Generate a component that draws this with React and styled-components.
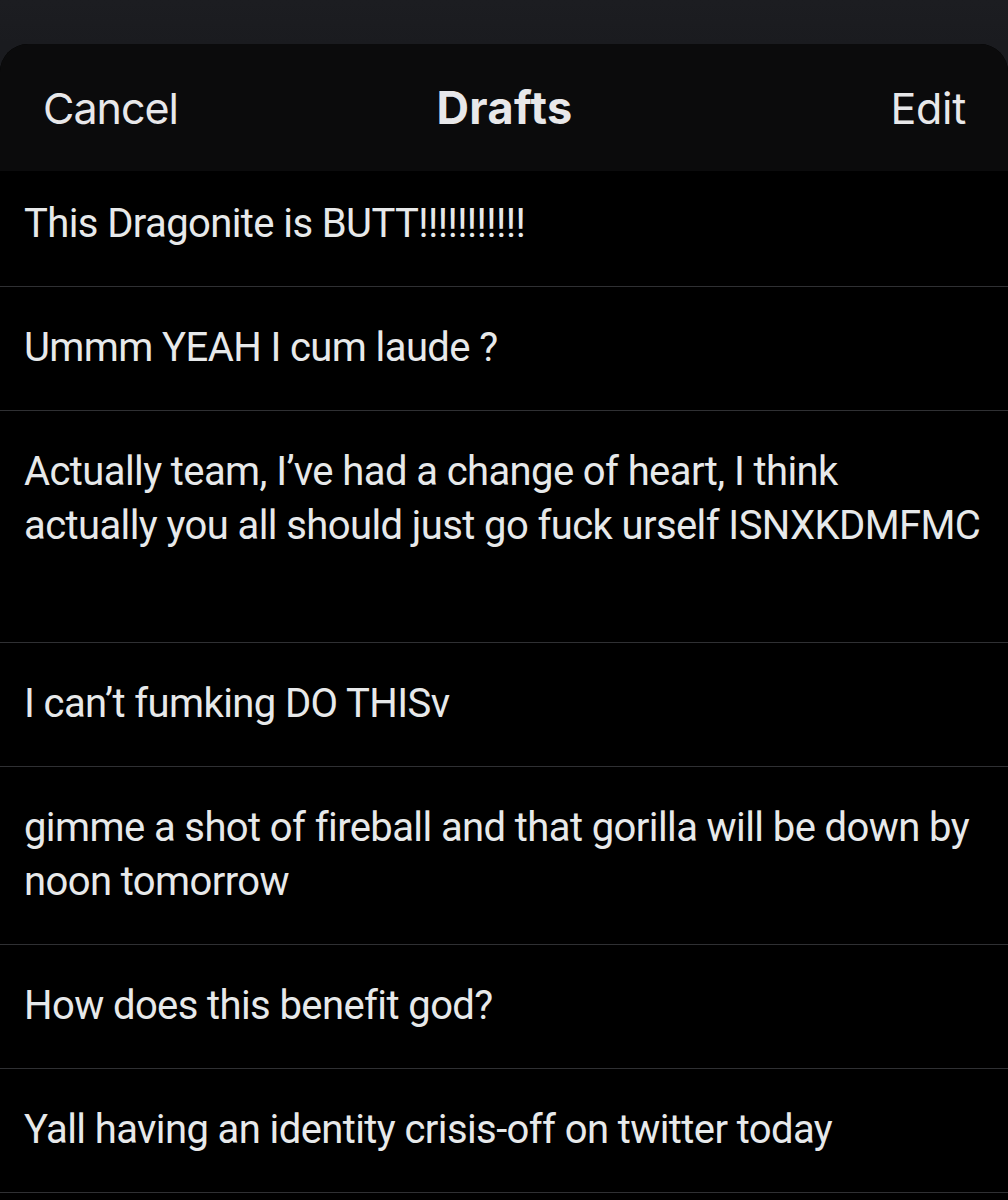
import React from "react";
import styled, { createGlobalStyle } from "styled-components";

const Global = createGlobalStyle`
  html, body {
    margin: 0;
    padding: 0;
    background: #1b1c20;
  }
  body {
    -webkit-font-smoothing: antialiased;
  }
`;

const Page = styled.div`
  width: 1008px;
  height: 1200px;
  overflow: hidden;
  padding-top: 44px;
  box-sizing: border-box;
  background: linear-gradient(180deg, #1c1d21 0%, #1a1b1f 44px);
`;

const Sheet = styled.div`
  background: #000;
  border-radius: 28px 28px 0 0;
  overflow: hidden;
  height: 100%;
`;

const Header = styled.header`
  height: 127px;
  background: #0b0b0c;
  display: grid;
  grid-template-columns: 1fr auto 1fr;
  align-items: center;
  padding: 0 42px 0 43px;
  font-family: Inter, "Noto Sans", sans-serif;
  font-size: 43px;
  color: #e8e8ea;
`;

const NavButton = styled.span`
  justify-self: ${(p) => (p.$end ? "end" : "start")};
  letter-spacing: ${(p) => (p.$end ? "-0.3px" : "-1px")};
`;

const Title = styled.span`
  font-size: 45px;
  font-weight: 700;
  letter-spacing: 0.4px;
`;

const List = styled.ul`
  list-style: none;
  margin: 0;
  padding: 0;
`;

const Row = styled.li`
  padding: ${(p) => (p.$first ? "26px" : "34px")} 24px 35px 24px;
  border-bottom: 1px solid #2f3033;
  font-family: Roboto, "Liberation Sans", sans-serif;
  font-size: 40px;
  line-height: 54px;
  color: #e7e9ea;
  white-space: pre-wrap;
  letter-spacing: -0.6px;
`;

const drafts = [
  "This Dragonite is BUTT!!!!!!!!!!!",
  "Ummm YEAH I cum laude ?",
  "Actually team, I\u2019ve had a change of heart, I think\nactually you all should just go fuck urself ISNXKDMFMC\n ",
  "I can\u2019t fumking DO THISv",
  "gimme a shot of fireball and that gorilla will be down by noon tomorrow",
  "How does this benefit god?",
  "Yall having an identity crisis-off on twitter today",
  "",
];

export default function App() {
  return (
    <>
      <Global />
      <Page>
        <Sheet>
          <Header>
            <NavButton>Cancel</NavButton>
            <Title>Drafts</Title>
            <NavButton $end>Edit</NavButton>
          </Header>
          <List>
            {drafts.map((d, i) => (
              <Row key={i} $first={i === 0}>
                {d || "\u00a0"}
              </Row>
            ))}
          </List>
        </Sheet>
      </Page>
    </>
  );
}
